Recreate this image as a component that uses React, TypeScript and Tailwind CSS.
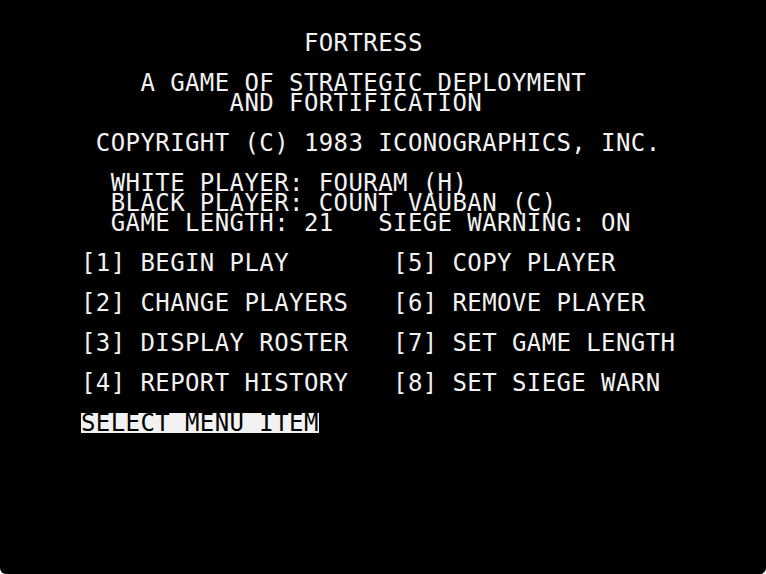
import React from 'react';

// 40 x 24 text screen; each entry is [row, text]
const rows: [number, string][] = [
  [1, '               FORTRESS'],
  [3, '    A GAME OF STRATEGIC DEPLOYMENT'],
  [4, '          AND FORTIFICATION'],
  [6, ' COPYRIGHT (C) 1983 ICONOGRAPHICS, INC.'],
  [8, '  WHITE PLAYER: FOURAM (H)'],
  [9, '  BLACK PLAYER: COUNT VAUBAN (C)'],
  [10, '  GAME LENGTH: 21   SIEGE WARNING: ON'],
  [12, '[1] BEGIN PLAY'.padEnd(21) + '[5] COPY PLAYER'],
  [14, '[2] CHANGE PLAYERS'.padEnd(21) + '[6] REMOVE PLAYER'],
  [16, '[3] DISPLAY ROSTER'.padEnd(21) + '[7] SET GAME LENGTH'],
  [18, '[4] REPORT HISTORY'.padEnd(21) + '[8] SET SIEGE WARN'],
];

export default function App() {
  const lines = Array.from({ length: 24 }, (_, i) => rows.find((r) => r[0] === i)?.[1] ?? '');

  return (
    <div className="w-[766px] h-[574px] bg-white">
      <div className="w-full h-full bg-black rounded-b-[6px] pl-[81px] pt-[13px]">
        <div
          className="text-[24px] leading-[20px] tracking-[0.41px] text-[#f2f2f2] whitespace-pre"
          style={{ fontFamily: '"DejaVu Sans Mono", "Liberation Mono", monospace' }}
        >
          {lines.map((line, i) =>
            i === 20 ? (
              <div key={i} className="h-[20px]">
                <span className="inline-block h-[20px] bg-[#f2f2f2] text-black">SELECT MENU ITEM</span>
              </div>
            ) : (
              <div key={i} className="h-[20px]">
                {line || ' '}
              </div>
            )
          )}
        </div>
      </div>
    </div>
  );
}
